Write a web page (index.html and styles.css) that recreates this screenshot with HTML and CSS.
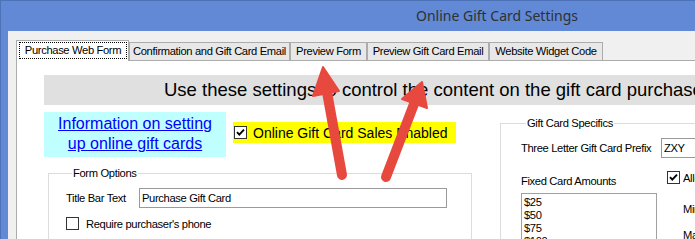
FILE: index.html
```html
<!DOCTYPE html>
<html lang="en">
<head>
<meta charset="utf-8">
<title>Online Gift Card Settings</title>
<link rel="stylesheet" href="styles.css">
</head>
<body>
<div class="window">
  <div class="titlebar">Online Gift Card Settings</div>
  <div class="client">
    <div class="tabs">
      <div class="tab active"><span class="focus">Purchase Web Form</span></div>
      <div class="tab t-conf">Confirmation and Gift Card Email</div>
      <div class="tab t-prev">Preview Form</div>
      <div class="tab t-pgce">Preview Gift Card Email</div>
      <div class="tab t-widget">Website Widget Code</div>
    </div>
    <div class="panel">
      <div class="banner">Use these settings to control the content on the gift card purchase page</div>
      <div class="main">
        <div class="leftcol">
          <div class="row1">
            <div class="infobox"><a class="infolink" href="#">Information on setting<br>up online gift cards</a></div>
            <div class="enabled">
              <span class="cb"><svg viewBox="0 0 11 11" width="11" height="11"><path d="M2 5.2 L4.3 7.6 L9 2.6" fill="none" stroke="#000" stroke-width="1.9"/></svg></span>
              <span>Online Gift Card Sales Enabled</span>
            </div>
          </div>
          <fieldset class="group formopts">
            <legend class="legend">Form Options</legend>
            <div class="field">
              <span class="lbl lbl-title">Title Bar Text</span>
              <div class="textbox tb-title">Purchase Gift Card</div>
            </div>
            <div class="check">
              <span class="cb"></span>
              <span>Require purchaser's phone</span>
            </div>
          </fieldset>
        </div>
        <fieldset class="group specifics">
          <legend class="legend legend-spec">Gift Card Specifics</legend>
          <div class="field">
            <span class="lbl lbl-prefix">Three Letter Gift Card Prefix</span>
            <div class="textbox tb-prefix">ZXY</div>
          </div>
          <div class="amounts">
            <div class="amt-left">
              <div class="lbl amt-label">Fixed Card Amounts</div>
              <div class="listbox">
                <div>$25</div>
                <div>$50</div>
                <div>$75</div>
                <div>$100</div>
              </div>
            </div>
            <div class="amt-right">
              <div class="check check-all">
                <span class="cb"><svg viewBox="0 0 11 11" width="11" height="11"><path d="M2 5.2 L4.3 7.6 L9 2.6" fill="none" stroke="#000" stroke-width="1.9"/></svg></span>
                <span>Allow custom amounts</span>
              </div>
              <div class="lbl minmax min">Minimum</div>
              <div class="lbl minmax max">Maximum</div>
            </div>
          </div>
        </fieldset>
      </div>
    </div>
  </div>
  <svg class="arrows" width="695" height="239" viewBox="0 0 695 239">
    <g fill="#e8493f" stroke="#e8493f" stroke-linejoin="round">
      <line x1="342" y1="175" x2="327" y2="92" stroke-width="10" stroke-linecap="round"/>
      <polygon points="323,67 339,91 313,96" stroke-width="2"/>
      <line x1="386" y1="177" x2="414" y2="104" stroke-width="10" stroke-linecap="round"/>
      <polygon points="422,82 427,108 402,99" stroke-width="2"/>
    </g>
  </svg>
</div>
</body>
</html>
```
FILE: styles.css
```css
html, body {
  margin: 0;
  padding: 0;
  overflow: hidden;
  background: #f0f0f0;
}
.window {
  position: relative;
  width: 1000px;
  height: 239px;
  display: flex;
  flex-direction: column;
  background: #6189d5;
  border-top: 1px solid #4d72b8;
  border-left: 1px solid #4d72b8;
  box-sizing: border-box;
  font-family: "Liberation Sans", Arial, sans-serif;
  font-size: 11.2px;
  letter-spacing: -0.35px;
  color: #000;
}
.titlebar {
  height: 30px;
  line-height: 30px;
  padding-left: 415px;
  font-family: "Noto Sans", "Open Sans", sans-serif;
  font-size: 14px;
  letter-spacing: 0;
  color: #303030;
  white-space: nowrap;
}
.client {
  flex: 1;
  margin-left: 7px;
  background: #f0f0f0;
  padding: 9px 0 0 8px;
  display: flex;
  flex-direction: column;
}
.tabs {
  display: flex;
  align-items: flex-end;
  height: 21px;
  margin-bottom: -1px;
  position: relative;
  z-index: 1;
}
.tab {
  box-sizing: border-box;
  height: 18px;
  margin-bottom: 1px;
  border: 1px solid #acacac;
  border-bottom: none;
  background: #e8e8e8;
  text-align: center;
  line-height: 17px;
  white-space: nowrap;
}
.tab.active {
  height: 21px;
  margin-bottom: 0;
  width: 113px;
  background: #fff;
  padding-top: 1px;
}
.focus {
  display: block;
  margin: 0 0 0 2px;
  width: 108px;
  height: 17px;
  line-height: 15px;
  border: 1px dotted #000;
  box-sizing: border-box;
}
.t-conf { width: 161px; }
.t-prev { width: 77px; }
.t-pgce { width: 122px; }
.t-widget { width: 114px; }
.panel {
  flex: 1;
  background: #fff;
  border-top: 1px solid #acacac;
  border-left: 1px solid #acacac;
  padding: 14px 0 0 27px;
}
.banner {
  height: 30px;
  line-height: 30px;
  padding-left: 120px;
  background: #e0e0e0;
  font-family: "Liberation Sans", Arial, sans-serif;
  font-size: 18.5px;
  letter-spacing: 0;
  white-space: nowrap;
  overflow: hidden;
}
.main {
  display: flex;
  align-items: flex-start;
  margin-top: 7px;
}
.leftcol {
  width: 428px;
}
.row1 {
  display: flex;
  align-items: flex-start;
}
.infobox {
  width: 182px;
  height: 45px;
  box-sizing: border-box;
  padding-top: 2px;
  background: #c0ffff;
  text-align: center;
  font-family: "Liberation Sans", Arial, sans-serif;
  font-size: 16px;
  letter-spacing: 0;
  line-height: 20px;
}
.infolink {
  color: #0000ff;
  text-decoration: underline;
}
.enabled {
  margin: 10px 0 0 7px;
  width: 223px;
  height: 21px;
  background: #ffff00;
  display: flex;
  align-items: center;
  font-family: "Liberation Sans", Arial, sans-serif;
  font-size: 14px;
  letter-spacing: 0;
  white-space: nowrap;
}
.enabled .cb {
  margin: 0 6px 0 1px;
}
.cb {
  box-sizing: border-box;
  width: 13px;
  height: 13px;
  border: 1px solid #333;
  background: #fff;
  display: inline-flex;
  align-items: center;
  justify-content: center;
  flex: none;
}
.cb svg {
  display: block;
}
.group {
  margin: 0;
  padding: 0;
  border: 1px solid #dcdcdc;
  min-width: 0;
}
.legend {
  padding: 0 1px;
  margin-left: 6px;
  line-height: 14px;
  white-space: nowrap;
}
.formopts {
  margin: 9px 0 0 4px;
  width: 424px;
  height: 90px;
  box-sizing: border-box;
  padding-left: 17px;
}
.field {
  display: flex;
  align-items: center;
  margin-top: 8px;
}
.lbl {
  line-height: 14px;
  white-space: nowrap;
}
.lbl-title { width: 73px; }
.textbox {
  box-sizing: border-box;
  height: 20px;
  border: 1px solid #9a9a9a;
  background: #fff;
  line-height: 18px;
  padding-left: 2px;
  white-space: nowrap;
}
.tb-title { width: 308px; }
.check {
  display: flex;
  align-items: center;
  margin-top: 9px;
  white-space: nowrap;
}
.check .cb {
  margin-right: 7px;
}
.specifics {
  margin: 4px 0 0 28px;
  width: 320px;
  height: 140px;
  box-sizing: border-box;
  padding-left: 20px;
}
.legend-spec {
  margin-left: 5px;
}
.lbl-prefix { width: 140px; }
.tb-prefix { width: 60px; }
.amounts {
  display: flex;
  align-items: flex-start;
}
.amt-left {
  width: 136px;
}
.amt-label {
  margin-top: 16px;
}
.listbox {
  margin-top: 5px;
  box-sizing: border-box;
  height: 60px;
  border: 1px solid #a0a0a0;
  padding: 2px 0 0 2px;
  line-height: 13px;
}
.amt-right {
  margin-left: 10px;
}
.check-all {
  margin-top: 13px;
}
.check-all .cb {
  margin-right: 3px;
}
.minmax {
  padding-left: 16px;
}
.min { margin-top: 18px; }
.max { margin-top: 12px; }
.arrows {
  position: absolute;
  left: -1px;
  top: -1px;
  pointer-events: none;
}
```
